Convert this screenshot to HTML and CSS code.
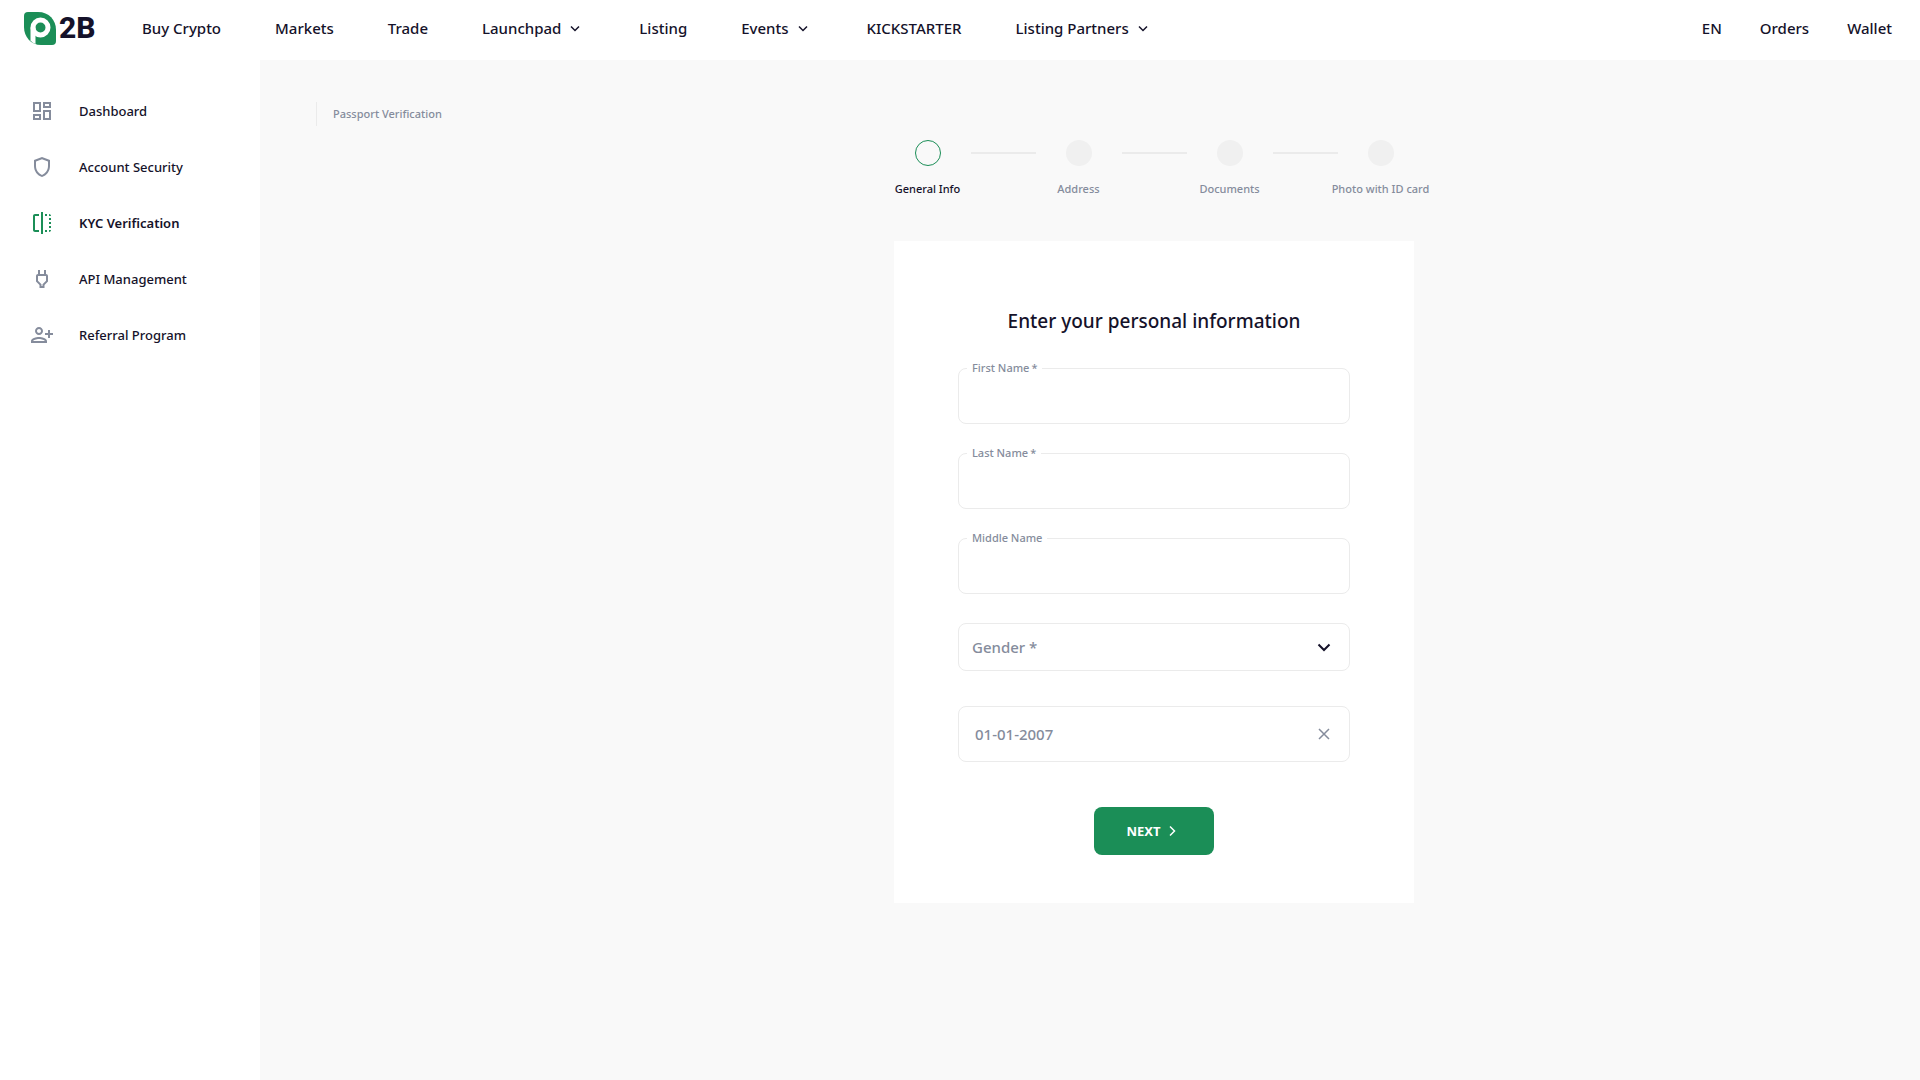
FILE: index.html
```html
<!DOCTYPE html>
<html lang="en">
<head>
    <meta charset="UTF-8">
    <meta name="viewport" content="width=device-width, initial-scale=1.0">
    <title>P2B - Passport Verification</title>
    <link rel="stylesheet" href="styles.css">
</head>
<body>
    <!-- Header -->
    <header class="header">
        <a href="#" class="logo">
            <svg class="logo-mark" width="33" height="33" viewBox="0 0 33 33">
                <path d="M4 0H14C25 0 32 8 32 18V29Q32 33 28 33H17C7 33 0 25 0 15V4Q0 0 4 0Z" fill="#1b8e57"/>
                <circle cx="16.500" cy="15.500" r="7.500" fill="none" stroke="#fff" stroke-width="5"/>
                <path d="M6.500 15.500H11.500V32Q8 30.500 6.500 28.500Z" fill="#fff"/>
            </svg>
            <span class="logo-text">2B</span>
        </a>
        <nav class="main-nav">
            <a href="#">Buy Crypto</a>
            <a href="#">Markets</a>
            <a href="#">Trade</a>
            <a href="#">Launchpad
                <svg class="arrow" width="20" height="20" viewBox="0 0 20 20"><path d="M6 8.500l4 4 4-4"/></svg>
            </a>
            <a href="#">Listing</a>
            <a href="#">Events
                <svg class="arrow" width="20" height="20" viewBox="0 0 20 20"><path d="M6 8.500l4 4 4-4"/></svg>
            </a>
            <a href="#">KICKSTARTER</a>
            <a href="#">Listing Partners
                <svg class="arrow" width="20" height="20" viewBox="0 0 20 20"><path d="M6 8.500l4 4 4-4"/></svg>
            </a>
        </nav>
        <nav class="user-nav">
            <a href="#">EN</a>
            <a href="#">Orders</a>
            <a href="#">Wallet</a>
        </nav>
    </header>

    <div class="page">
        <!-- Sidebar -->
        <aside class="sidebar">
            <a href="#">
                <svg width="24" height="24" viewBox="0 0 24 24"><path d="M19 5v2h-4V5h4M9 5v6H5V5h4m10 8v6h-4v-6h4M9 17v2H5v-2h4M21 3h-8v6h8V3zM11 3H3v10h8V3zm10 8h-8v10h8V11zm-10 4H3v6h8v-6z"/></svg>
                Dashboard
            </a>
            <a href="#">
                <svg width="24" height="24" viewBox="0 0 24 24"><path d="M12 2L4 5v6.090c0 5.050 3.410 9.760 8 10.910 4.590-1.150 8-5.860 8-10.910V5l-8-3zm6 9.090c0 4-2.550 7.700-6 8.830-3.450-1.130-6-4.820-6-8.830v-4.700l6-2.250 6 2.250v4.700z"/></svg>
                Account Security
            </a>
            <a href="#" class="active">
                <svg width="24" height="24" viewBox="0 0 24 24"><path d="M15 21h2v-2h-2v2zm4-12h2V7h-2v2zM3 5v14c0 1.100.9 2 2 2h4v-2H5V5h4V3H5c-1.100 0-2 .9-2 2zm16-2v2h2c0-1.100-.9-2-2-2zm-8 20h2V1h-2v22zm8-6h2v-2h-2v2zM15 5h2V3h-2v2zm4 8h2v-2h-2v2zm0 8c1.100 0 2-.9 2-2h-2v2z"/></svg>
                KYC Verification
            </a>
            <a href="#">
                <svg width="24" height="24" viewBox="0 0 24 24"><path d="M16 9v4.660l-3.500 3.510V19h-1v-1.830L8 13.650V9h8m0-6h-2v4h-4V3H8v4h-.01C6.900 6.990 6 7.890 6 8.980v5.520L9.500 18v3h5v-3l3.500-3.510V9c0-1.100-.9-2-2-2V3z"/></svg>
                API Management
            </a>
            <a href="#">
                <svg width="24" height="24" viewBox="0 0 24 24"><path d="M13 8c0-2.210-1.790-4-4-4S5 5.790 5 8s1.790 4 4 4 4-1.790 4-4zm-2 0c0 1.100-.9 2-2 2s-2-.9-2-2 .9-2 2-2 2 .9 2 2zM1 18v2h16v-2c0-2.660-5.330-4-8-4s-8 1.340-8 4zm2 0c.2-.71 3.300-2 6-2 2.690 0 5.770 1.280 6 2H3zm17-3v-3h3v-2h-3V7h-2v3h-3v2h3v3h2z"/></svg>
                Referral Program
            </a>
        </aside>

        <main class="main">
            <p class="breadcrumb">Passport Verification</p>

            <div class="content">
                <!-- Steps -->
                <ol class="steps">
                    <li class="step current"><span class="dot"></span>General Info</li>
                    <li class="line"></li>
                    <li class="step"><span class="dot"></span>Address</li>
                    <li class="line"></li>
                    <li class="step"><span class="dot"></span>Documents</li>
                    <li class="line"></li>
                    <li class="step"><span class="dot"></span>Photo with ID card</li>
                </ol>

                <!-- Form -->
                <form class="card">
                    <h1>Enter your personal information</h1>
                    <div class="field">
                        <label for="first-name">First Name<span>*</span></label>
                        <input type="text" id="first-name">
                    </div>
                    <div class="field">
                        <label for="last-name">Last Name<span>*</span></label>
                        <input type="text" id="last-name">
                    </div>
                    <div class="field">
                        <label for="middle-name">Middle Name</label>
                        <input type="text" id="middle-name">
                    </div>
                    <div class="field gender">
                        <select id="gender" aria-label="Gender">
                            <option>Gender *</option>
                            <option>Male</option>
                            <option>Female</option>
                        </select>
                        <svg class="select-arrow" width="24" height="24" viewBox="0 0 24 24"><path d="M6.500 9.500l5.500 5.500 5.500-5.500"/></svg>
                    </div>
                    <div class="field date">
                        <input type="text" id="birth-date" value="01-01-2007" aria-label="Date of birth">
                        <button type="button" class="clear" aria-label="Clear date">
                            <svg width="24" height="24" viewBox="0 0 24 24"><path d="M7 7l10 10M17 7L7 17"/></svg>
                        </button>
                    </div>
                    <button type="submit" class="next">NEXT
                        <svg width="20" height="20" viewBox="0 0 20 20"><path d="M8 5.500l4.500 4.500L8 14.500"/></svg>
                    </button>
                </form>
            </div>
        </main>
    </div>
</body>
</html>
```
FILE: styles.css
```css
* {
    margin: 0;
    padding: 0;
    box-sizing: border-box;
}

body {
    min-height: 100vh;
    display: flex;
    flex-direction: column;
    font-family: "Noto Sans", sans-serif;
    font-weight: 500;
    color: #15122a;
    background-color: #fff;
}

a {
    color: inherit;
    text-decoration: none;
}

/* Header */
.header {
    height: 60px;
    padding: 0 28px 4px 24px;
    display: flex;
    align-items: center;
    font-size: 15px;
    white-space: nowrap;
}

.logo {
    display: flex;
    align-items: center;
    gap: 2px;
    width: 118px;
}

.logo-text {
    font-family: "Liberation Sans Narrow", "Roboto", sans-serif;
    font-size: 30px;
    line-height: 32px;
    font-weight: 800;
}

.main-nav {
    display: flex;
    gap: 54px;
}

.main-nav a {
    display: flex;
    align-items: center;
    gap: 4px;
}

.arrow {
    fill: none;
    stroke: #15122a;
    stroke-width: 1.500;
}

.user-nav {
    display: flex;
    gap: 38px;
    margin-left: auto;
}

.page {
    flex: 1;
    display: flex;
}

/* Sidebar */
.sidebar {
    flex: 0 0 260px;
    padding: 23px 30px;
    font-size: 13px;
}

.sidebar a {
    display: flex;
    align-items: center;
    gap: 25px;
    height: 56px;
}

.sidebar svg {
    fill: #858c9c;
}

.sidebar .active {
    font-weight: 600;
}

.sidebar .active svg {
    fill: #1b8e57;
}

/* Main */
.main {
    flex: 1;
    padding: 42px 0 40px 56px;
    background-color: #f9f9f9;
}

.breadcrumb {
    padding-left: 16px;
    border-left: 1px solid #ebebeb;
    font-size: 11px;
    line-height: 24px;
    color: #858c9c;
}

.content {
    display: flex;
    flex-direction: column;
    align-items: center;
    padding: 14px 0 0 72px;
}

.steps {
    display: flex;
    list-style: none;
    margin-bottom: 43px;
}

.step {
    width: 86px;
    display: flex;
    flex-direction: column;
    align-items: center;
    gap: 14px;
    font-size: 11px;
    line-height: 18px;
    white-space: nowrap;
    color: #858c9c;
}

.dot {
    width: 26px;
    height: 26px;
    border-radius: 50%;
    background-color: #f0f0f0;
}

.current {
    color: #15122a;
}

.current .dot {
    border: 1px solid #1b8e57;
    background-color: transparent;
}

.line {
    width: 65px;
    height: 2px;
    margin-top: 12px;
    background-color: #ebebeb;
}

.card {
    width: 100%;
    max-width: 520px;
    padding: 64px 64px 48px;
    display: flex;
    flex-direction: column;
    align-items: center;
    background-color: #fff;
}

.card h1 {
    margin-bottom: 31px;
    font-size: 19px;
    line-height: 32px;
    font-weight: 500;
}

.field {
    position: relative;
    width: 100%;
    margin-bottom: 29px;
}

.field label {
    position: absolute;
    top: -8px;
    left: 9px;
    padding: 0 5px;
    font-size: 11px;
    line-height: 16px;
    color: #858c9c;
    background-color: #fff;
}

.field label span {
    margin-left: 2px;
}

.field input,
.field select {
    display: block;
    width: 100%;
    height: 56px;
    padding: 0 16px;
    border: 1px solid #ebebeb;
    border-radius: 8px;
    font: inherit;
    font-size: 15px;
    color: #858c9c;
    background-color: #fff;
}

.gender {
    margin-bottom: 35px;
}

.field select {
    height: 48px;
    padding: 0 13px;
    appearance: none;
}

.select-arrow {
    position: absolute;
    top: 12px;
    right: 14px;
    fill: none;
    stroke: #15122a;
    stroke-width: 2;
    pointer-events: none;
}

.date {
    margin-bottom: 45px;
}

.clear {
    position: absolute;
    top: 16px;
    right: 14px;
    width: 24px;
    height: 24px;
    border: none;
    background: none;
    cursor: pointer;
}

.clear svg {
    display: block;
    fill: none;
    stroke: #858c9c;
    stroke-width: 1.500;
}

.next {
    display: flex;
    align-items: center;
    gap: 1px;
    height: 48px;
    padding: 0 32px;
    border: none;
    border-radius: 8px;
    font: inherit;
    font-size: 13px;
    font-weight: 700;
    color: #fff;
    background-color: #1b8e57;
    cursor: pointer;
}

.next svg {
    fill: none;
    stroke: #fff;
    stroke-width: 1.500;
}
```
